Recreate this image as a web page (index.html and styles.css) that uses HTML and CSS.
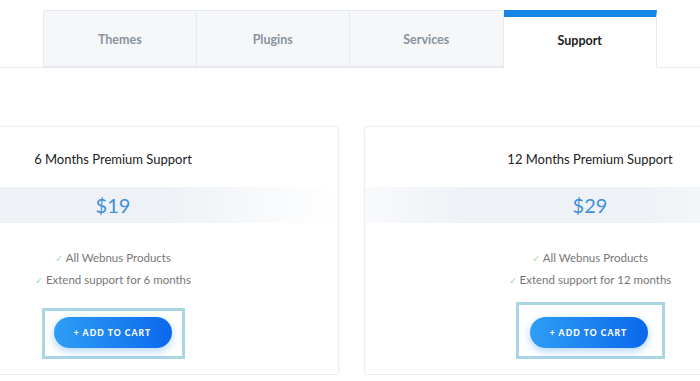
FILE: index.html
```html
<!DOCTYPE html>
<html lang="en">
<head>
    <meta charset="UTF-8">
    <meta name="viewport" content="width=device-width, initial-scale=1.0">
    <title>Support Plans</title>
    <link rel="stylesheet" href="styles.css">
</head>
<body>
    <!-- Product tabs -->
    <div class="tabs-bar">
        <div class="tabs">
            <div class="tab">Themes</div>
            <div class="tab">Plugins</div>
            <div class="tab">Services</div>
            <div class="tab active">Support</div>
        </div>
    </div>

    <!-- Support plans -->
    <div class="plans">
        <div class="plan">
            <h3 class="plan-title">6 Months Premium Support</h3>
            <div class="plan-price">$19</div>
            <ul class="plan-features">
                <li><span class="check">&#10003;</span> All Webnus Products</li>
                <li><span class="check">&#10003;</span> Extend support for 6 months</li>
            </ul>
            <div class="cart-box">
                <button class="cart-btn">+ ADD TO CART</button>
            </div>
        </div>

        <div class="plan">
            <h3 class="plan-title">12 Months Premium Support</h3>
            <div class="plan-price">$29</div>
            <ul class="plan-features">
                <li><span class="check">&#10003;</span> All Webnus Products</li>
                <li><span class="check">&#10003;</span> Extend support for 12 months</li>
            </ul>
            <div class="cart-box cart-box-wide">
                <button class="cart-btn">+ ADD TO CART</button>
            </div>
        </div>
    </div>
</body>
</html>
```

FILE: styles.css
```css
body {
    font-family: Lato, 'Open Sans', sans-serif;
    background-color: #fff;
    margin: 0;
    padding: 0;
    overflow: hidden;
}

.tabs-bar {
    padding-top: 10px;
    border-bottom: 1px solid #e6e9ed;
}

.tabs {
    display: flex;
    margin-left: 43px;
    margin-bottom: -1px;
}

.tab {
    width: 153.5px;
    height: 57px;
    box-sizing: border-box;
    display: flex;
    align-items: center;
    justify-content: center;
    padding-top: 2px;
    background-color: #f5f7f9;
    border: 1px solid #e6e9ed;
    border-left: none;
    color: #8a949f;
    font-size: 12.5px;
    font-weight: 700;
}

.tab:first-child {
    border-left: 1px solid #e6e9ed;
}

.tab.active {
    height: 58px;
    background-color: #fff;
    border-top: 7px solid #1685e8;
    border-bottom-color: #fff;
    color: #222;
    padding-top: 0;
    padding-bottom: 4px;
}

.plans {
    display: flex;
    gap: 25px;
    margin-top: 58px;
    margin-left: -113px;
}

.plan {
    flex: 0 0 452px;
    box-sizing: border-box;
    border: 1px solid #eceff2;
    border-radius: 4px;
    box-shadow: 0 1px 4px rgba(0, 0, 0, 0.03);
    padding: 24px 0 15px;
    text-align: center;
}

.plan-title {
    margin: 0;
    font-size: 13px;
    line-height: 16px;
    font-weight: 400;
    color: #222;
}

.plan-price {
    margin-top: 20px;
    height: 36px;
    line-height: 36px;
    font-size: 20px;
    color: #3f8fd6;
    background: linear-gradient(90deg, #f9fafc 0%, #eef2f6 22%, #eef2f6 62%, #fff 100%);
}

.plan-features {
    list-style: none;
    margin: 24px 0 0;
    padding: 0;
    font-size: 11.5px;
    line-height: 22px;
    color: #777;
}

.check {
    color: #a9d8bb;
    font-size: 10px;
}

.cart-box {
    display: inline-block;
    margin-top: 17px;
    border: 3px solid #a8d6e3;
    padding: 6px 10px 8px 9px;
}

.cart-box-wide {
    margin-top: 11px;
    padding: 12px 14px 8px 11px;
}

.cart-btn {
    display: block;
    width: 118px;
    height: 31px;
    border: none;
    border-radius: 16px;
    background: linear-gradient(90deg, #2f9ef5, #0a68ec);
    box-shadow: 0 3px 8px rgba(30, 130, 240, 0.35);
    color: #fff;
    font-family: Lato, sans-serif;
    font-size: 8.5px;
    font-weight: 900;
    letter-spacing: 1.1px;
    cursor: pointer;
}
```
